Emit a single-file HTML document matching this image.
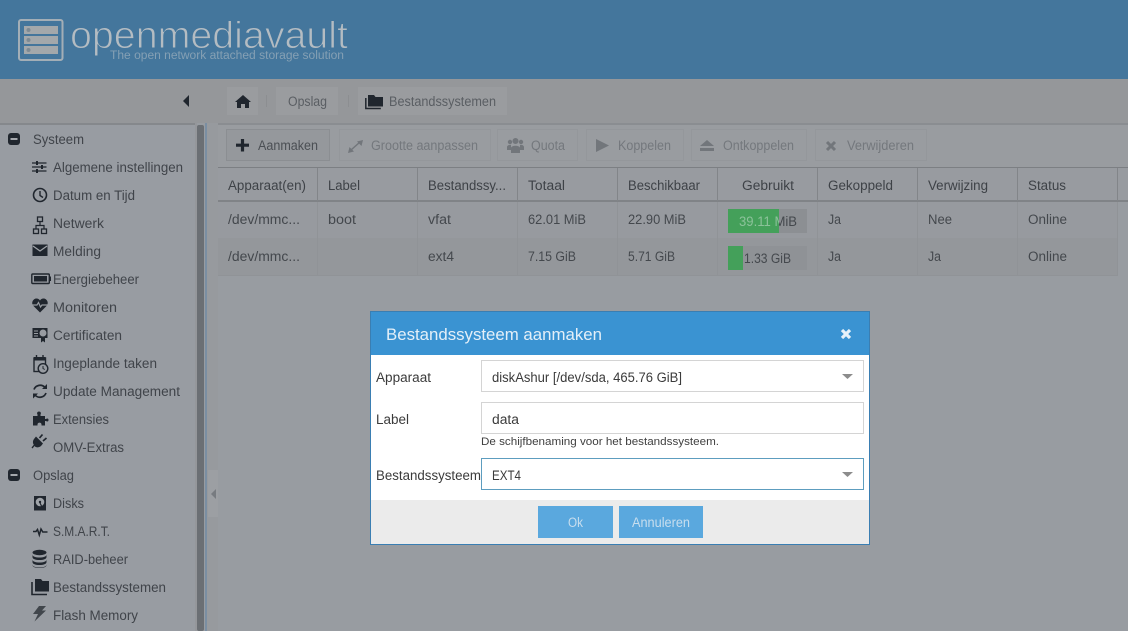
<!DOCTYPE html>
<html><head><meta charset="utf-8"><title>openmediavault</title>
<style>
html,body{margin:0;padding:0;width:1128px;height:631px;overflow:hidden;background:#989ca1}
svg{display:block}
text{font-family:"Liberation Sans",sans-serif;font-size:13.5px;fill:#40444a;white-space:pre}
.d{fill:#74787d}
.h{fill:#3e4247}
.c{fill:#44484d}
.m{fill:#3b3b3b}
.i{fill:#20262e}
.g{fill:#72767b}
.s{stroke:#20262e;fill:none;stroke-width:1.4}
</style></head><body>
<svg width="1128" height="631" viewBox="0 0 1128 631" xmlns="http://www.w3.org/2000/svg">
<defs><clipPath id="pg"><rect x="728" y="209" width="51" height="24"/></clipPath></defs>
<rect width="1128" height="631" fill="#989ca1"/>
<!-- header -->
<rect width="1128" height="79" fill="#44769c"/>
<rect x="19" y="20" width="43.500" height="40" rx="2" fill="none" stroke="#a3aeb6" stroke-width="2"/>
<rect x="24" y="26" width="34" height="8" fill="#a3a8ab"/><rect x="24" y="36" width="34" height="8" fill="#a3a8ab"/><rect x="24" y="46" width="34" height="8" fill="#a3a8ab"/>
<circle cx="28.500" cy="30" r="2" fill="#7d8a94"/><circle cx="28.500" cy="40" r="2" fill="#7d8a94"/><circle cx="28.500" cy="50" r="2" fill="#7d8a94"/>
<text x="70" y="48" textLength="278" lengthAdjust="spacingAndGlyphs" stroke="#44769c" stroke-width="1" style="font-size:38px;fill:#b4bcc2">openmediavault</text>
<text x="110" y="59" textLength="234" lengthAdjust="spacingAndGlyphs" style="font-size:11.500px;fill:#85a0b4">The open network attached storage solution</text>
<!-- breadcrumb bar -->
<rect y="79" width="1128" height="44" fill="#95979a"/>
<path d="M189 95v12l-6-6z" fill="#20262e"/>
<rect x="227" y="87" width="31" height="28" fill="#9a9c9f"/>
<path d="M243 95l-8 7h2v6h4v-4h4v4h4v-6h2z" fill="#20262e"/>
<rect x="266" y="95" width="1" height="12" fill="#8c8e91"/>
<rect x="276" y="87" width="62" height="28" fill="#9a9c9f"/>
<text x="288" y="106" textLength="39" lengthAdjust="spacingAndGlyphs" style="fill:#5a5e63">Opslag</text>
<rect x="348" y="95" width="1" height="12" fill="#8c8e91"/>
<rect x="358" y="87" width="149" height="28" fill="#9a9c9f"/>
<path d="M365.800 98v10.500h15" fill="none" stroke="#20262e" stroke-width="1.500"/><path d="M368 95h6l1.500 2h7.500v9.500h-15z" fill="#20262e"/>
<text x="389" y="106" textLength="107" lengthAdjust="spacingAndGlyphs" style="fill:#5a5e63">Bestandssystemen</text>
<!-- sidebar -->
<rect y="123" width="195" height="508" fill="#989ca2"/>
<rect y="123" width="195" height="2" fill="#85888c"/>
<rect x="195" y="123" width="2" height="508" fill="#95979b"/>
<rect x="197" y="125" width="7" height="506" rx="2" fill="#6b6f74"/>
<rect x="205" y="123" width="2" height="508" fill="#7a8ea2"/>
<rect x="207" y="123" width="11" height="508" fill="#979a9e"/>
<rect x="208" y="470" width="10" height="47" fill="#9c9fa3"/>
<path d="M216 489v10l-5-5z" fill="#777b80"/>
<!-- sidebar group icons -->
<rect x="8" y="133" width="12" height="12" rx="3" class="i"/><rect x="10.500" y="138" width="7" height="2" fill="#a5a8ad"/>
<rect x="8" y="469" width="12" height="12" rx="3" class="i"/><rect x="10.500" y="474" width="7" height="2" fill="#a5a8ad"/>
<text x="33" y="144" textLength="51" lengthAdjust="spacingAndGlyphs">Systeem</text>
<text x="53" y="172" textLength="130" lengthAdjust="spacingAndGlyphs">Algemene instellingen</text>
<text x="53" y="200" textLength="82" lengthAdjust="spacingAndGlyphs">Datum en Tijd</text>
<text x="53" y="228" textLength="51" lengthAdjust="spacingAndGlyphs">Netwerk</text>
<text x="53" y="256" textLength="48" lengthAdjust="spacingAndGlyphs">Melding</text>
<text x="53" y="284" textLength="86" lengthAdjust="spacingAndGlyphs">Energiebeheer</text>
<text x="53" y="312" textLength="64" lengthAdjust="spacingAndGlyphs">Monitoren</text>
<text x="53" y="340" textLength="69" lengthAdjust="spacingAndGlyphs">Certificaten</text>
<text x="53" y="368" textLength="104" lengthAdjust="spacingAndGlyphs">Ingeplande taken</text>
<text x="53" y="396" textLength="127" lengthAdjust="spacingAndGlyphs">Update Management</text>
<text x="53" y="424" textLength="56" lengthAdjust="spacingAndGlyphs">Extensies</text>
<text x="53" y="452" textLength="71" lengthAdjust="spacingAndGlyphs">OMV-Extras</text>
<text x="33" y="480" textLength="41" lengthAdjust="spacingAndGlyphs">Opslag</text>
<text x="53" y="508" textLength="31" lengthAdjust="spacingAndGlyphs">Disks</text>
<text x="53" y="536" textLength="57" lengthAdjust="spacingAndGlyphs">S.M.A.R.T.</text>
<text x="53" y="564" textLength="75" lengthAdjust="spacingAndGlyphs">RAID-beheer</text>
<text x="53" y="592" textLength="113" lengthAdjust="spacingAndGlyphs">Bestandssystemen</text>
<text x="53" y="620" textLength="85" lengthAdjust="spacingAndGlyphs">Flash Memory</text>
<!-- sliders -->
<path d="M32 163h14.500M32 167h14.500M32 171h14.500" stroke="#20262e" stroke-width="1.200"/>
<rect x="36" y="161" width="2" height="4" class="i"/><rect x="41" y="165" width="2" height="4" class="i"/><rect x="36" y="169" width="2" height="4" class="i"/>
<!-- clock -->
<circle cx="40" cy="195" r="6.500" class="s" style="stroke-width:1.600"/><path d="M40 191v4.500l3 2" class="s"/>
<!-- network -->
<path d="M40 222v3.500M36 229v-3.500h8v3.500" class="s" style="stroke-width:1.200"/>
<rect x="37.500" y="217" width="5" height="4.500" class="s" style="stroke-width:1.300"/><rect x="33.500" y="229" width="5" height="4.500" class="s" style="stroke-width:1.300"/><rect x="41.500" y="229" width="5" height="4.500" class="s" style="stroke-width:1.300"/>
<!-- mail -->
<rect x="32.500" y="244.500" width="15" height="11.500" class="i"/><path d="M33 246l7 5 7-5" fill="none" stroke="#a0a4a9" stroke-width="1.300"/>
<!-- battery -->
<rect x="31.800" y="274" width="17.500" height="9.500" rx="1" class="s"/><rect x="34" y="276" width="13" height="5.500" class="i"/><rect x="50" y="276.500" width="1" height="4.500" class="i"/>
<!-- heart -->
<path d="M40 312.500l-6.500-6.500c-3-3.500 0-7.500 3-7.500 1.500 0 2.700 .7 3.500 2 .8-1.300 2-2 3.500-2 3 0 6 4 3 7.500z" class="i"/>
<path d="M32 305h5l1.500-2.500 2 4.500 1.500-2h6" fill="none" stroke="#989ca2" stroke-width="1.200"/>
<!-- certificate -->
<rect x="32.500" y="328" width="15" height="10" class="i"/><path d="M34 331h4M34 333.500h4M34 336h4" stroke="#989ca2" stroke-width="1"/>
<circle cx="43" cy="333" r="3.500" fill="#989ca2"/><path d="M41 338h4v4.500l-2-1.500-2 1.500z" class="i"/>
<!-- calendar clock -->
<rect x="34" y="358" width="11.500" height="13.500" class="s"/><rect x="34" y="357" width="11.500" height="3.500" class="i"/><path d="M36.500 355v3M43 355v3" class="s"/>
<circle cx="43" cy="368.500" r="4.800" fill="#989ca2" stroke="#20262e" stroke-width="1.400"/><path d="M43 366v2.500l1.800 1" class="s" style="stroke-width:1"/>
<!-- sync -->
<path d="M34 389.500a6.500 6.500 0 0 1 11-2M46 393a6.500 6.500 0 0 1-11 2" class="s" style="stroke-width:1.700"/><path d="M47 384v5h-5zM33 398.500v-5h5z" class="i"/>
<!-- puzzle -->
<path d="M33 416h4.500v-1.500c-1-1.500 0-3 1.500-3s2.500 1.500 1.500 3V416H45v3h1c1.500-1 2.500-.3 2.500 1s-1 2-2.500 1h-1v4.500h-3.500v-1c0-2.500-4-2.500-4 0v1H33z" class="i"/>
<!-- plug -->
<path d="M36 436.500l7 7-2 2.500c-2.500 2-5 1.700-6.500 0l-2 2.500-1-1 2.300-2.700c-1.200-1.600-1.200-4 .4-6z" class="i"/><path d="M39.500 438l3-3.500M43 441l3.500-3" stroke="#20262e" stroke-width="1.700"/>
<!-- disk -->
<rect x="34" y="496" width="12" height="14.500" class="i"/><circle cx="40" cy="502" r="4.300" fill="#a0a4a9"/><circle cx="40" cy="502" r="1.200" class="i"/><path d="M40 503l2.500 5" stroke="#20262e" stroke-width="1.200"/>
<!-- pulse -->
<path d="M33 531.500h3l1.500-2 1.800 5.500 1.700-6 1.800 3h4.700" fill="none" stroke="#20262e" stroke-width="1.500"/>
<!-- database -->
<ellipse cx="39.500" cy="552.500" rx="7" ry="2.700" class="i"/>
<path d="M32.500 554.500c0 2 3 3 7 3s7-1 7-3v2.500c0 2-3 3-7 3s-7-1-7-3zM32.500 559.500c0 2 3 3 7 3s7-1 7-3v2.500c0 2-3 3-7 3s-7-1-7-3zM32.500 564.500c0 2 3 3 7 3s7-1 7-3v0.500c0 2-3 3-7 3s-7-1-7-3z" class="i"/>
<!-- folders -->
<path d="M32 582v12.500h15" fill="none" stroke="#20262e" stroke-width="1.600"/><path d="M35 579h6l1.500 2h6.500v10.500H35z" class="i"/>
<!-- flash -->
<path d="M39 606h7l-4 4.500h4l-11.500 11 3.500-7.500h-5z" fill="#41464c"/>
<!-- main area -->
<rect x="218" y="123" width="910" height="508" fill="#989ca1"/>
<rect x="218" y="123" width="910" height="2" fill="#8a8d91"/>
<rect x="218" y="125" width="910" height="42" fill="#999ca0"/>
<!-- toolbar -->
<rect x="226.500" y="129.500" width="103" height="31" fill="#95989c" stroke="#8b8e92"/>
<path d="M242.500 139v12.500M236 145.200h13" stroke="#20262e" stroke-width="3.200"/>
<text x="258" y="150" textLength="60" lengthAdjust="spacingAndGlyphs" style="fill:#4b4f54">Aanmaken</text>
<rect x="339.500" y="129.500" width="151" height="31" fill="#999ca0" stroke="#94979b"/>
<path d="M348 153l1.500-6 4.500 4.500zM363 140l-6 1.500 4.500 4.500z" fill="#72767b"/><path d="M351 150l9-8" stroke="#72767b" stroke-width="1.500"/>
<text x="371" y="150" textLength="107" lengthAdjust="spacingAndGlyphs" class="d">Grootte aanpassen</text>
<rect x="497.500" y="129.500" width="80" height="31" fill="#999ca0" stroke="#94979b"/>
<circle cx="515.500" cy="141" r="3" class="g"/><circle cx="510" cy="142" r="2.200" class="g"/><circle cx="521" cy="142" r="2.200" class="g"/>
<path d="M511 153v-5c0-3 9-3 9 0v5z" class="g"/><path d="M507 150v-3c0-2 3-2.500 4-2v5zM524 150v-3c0-2-3-2.500-4-2v5z" class="g"/>
<text x="531" y="150" textLength="34" lengthAdjust="spacingAndGlyphs" class="d">Quota</text>
<rect x="586.500" y="129.500" width="97" height="31" fill="#999ca0" stroke="#94979b"/>
<path d="M596 139l13 6.500-13 6.500z" class="g"/>
<text x="618" y="150" textLength="53" lengthAdjust="spacingAndGlyphs" class="d">Koppelen</text>
<rect x="691.500" y="129.500" width="115" height="31" fill="#999ca0" stroke="#94979b"/>
<path d="M707 140l7 6h-14z" class="g"/><rect x="700" y="148" width="14" height="3" class="g"/>
<text x="723" y="150" textLength="71" lengthAdjust="spacingAndGlyphs" class="d">Ontkoppelen</text>
<rect x="815.500" y="129.500" width="111" height="31" fill="#999ca0" stroke="#94979b"/>
<path d="M827 142l8 8M835 142l-8 8" stroke="#72767b" stroke-width="3"/>
<text x="847" y="150" textLength="67" lengthAdjust="spacingAndGlyphs" class="d">Verwijderen</text>
<!-- grid -->
<rect x="218" y="167" width="910" height="1" fill="#7c7f83"/>
<rect x="218" y="168" width="910" height="33" fill="#989ba0"/>
<rect x="218" y="200" width="910" height="2" fill="#808387"/>
<rect x="218" y="202" width="900" height="36" fill="#979a9f"/>
<rect x="218" y="238" width="900" height="37" fill="#94979b"/>
<rect x="218" y="275" width="900" height="1" fill="#909397"/>
<g fill="#828589"><rect x="317" y="168" width="1" height="33"/><rect x="417" y="168" width="1" height="33"/><rect x="517" y="168" width="1" height="33"/><rect x="617" y="168" width="1" height="33"/><rect x="717" y="168" width="1" height="33"/><rect x="817" y="168" width="1" height="33"/><rect x="917" y="168" width="1" height="33"/><rect x="1017" y="168" width="1" height="33"/><rect x="1117" y="168" width="1" height="33"/></g>
<g fill="#909397"><rect x="317" y="202" width="1" height="73"/><rect x="417" y="202" width="1" height="73"/><rect x="517" y="202" width="1" height="73"/><rect x="617" y="202" width="1" height="73"/><rect x="717" y="202" width="1" height="73"/><rect x="817" y="202" width="1" height="73"/><rect x="917" y="202" width="1" height="73"/><rect x="1017" y="202" width="1" height="73"/><rect x="1117" y="202" width="1" height="73"/></g>
<text x="228" y="190" textLength="78" lengthAdjust="spacingAndGlyphs" class="h">Apparaat(en)</text>
<text x="328" y="190" textLength="32" lengthAdjust="spacingAndGlyphs" class="h">Label</text>
<text x="428" y="190" textLength="78" lengthAdjust="spacingAndGlyphs" class="h">Bestandssy...</text>
<text x="528" y="190" textLength="37" lengthAdjust="spacingAndGlyphs" class="h">Totaal</text>
<text x="628" y="190" textLength="72" lengthAdjust="spacingAndGlyphs" class="h">Beschikbaar</text>
<text x="742" y="190" textLength="52" lengthAdjust="spacingAndGlyphs" class="h">Gebruikt</text>
<text x="828" y="190" textLength="65" lengthAdjust="spacingAndGlyphs" class="h">Gekoppeld</text>
<text x="928" y="190" textLength="60" lengthAdjust="spacingAndGlyphs" class="h">Verwijzing</text>
<text x="1028" y="190" textLength="38" lengthAdjust="spacingAndGlyphs" class="h">Status</text>
<text x="228" y="224" textLength="72" lengthAdjust="spacingAndGlyphs" class="c">/dev/mmc...</text>
<text x="328" y="224" textLength="28" lengthAdjust="spacingAndGlyphs" class="c">boot</text>
<text x="428" y="224" textLength="23" lengthAdjust="spacingAndGlyphs" class="c">vfat</text>
<text x="528" y="224" textLength="58" lengthAdjust="spacingAndGlyphs" class="c">62.01 MiB</text>
<text x="628" y="224" textLength="58" lengthAdjust="spacingAndGlyphs" class="c">22.90 MiB</text>
<text x="828" y="224" textLength="13" lengthAdjust="spacingAndGlyphs" class="c">Ja</text>
<text x="928" y="224" textLength="24" lengthAdjust="spacingAndGlyphs" class="c">Nee</text>
<text x="1028" y="224" textLength="39" lengthAdjust="spacingAndGlyphs" class="c">Online</text>
<text x="228" y="261" textLength="72" lengthAdjust="spacingAndGlyphs" class="c">/dev/mmc...</text>
<text x="428" y="261" textLength="26" lengthAdjust="spacingAndGlyphs" class="c">ext4</text>
<text x="528" y="261" textLength="48" lengthAdjust="spacingAndGlyphs" class="c">7.15 GiB</text>
<text x="628" y="261" textLength="47" lengthAdjust="spacingAndGlyphs" class="c">5.71 GiB</text>
<text x="828" y="261" textLength="13" lengthAdjust="spacingAndGlyphs" class="c">Ja</text>
<text x="928" y="261" textLength="13" lengthAdjust="spacingAndGlyphs" class="c">Ja</text>
<text x="1028" y="261" textLength="39" lengthAdjust="spacingAndGlyphs" class="c">Online</text>
<rect x="728" y="209" width="79" height="24" fill="#8c8f93"/>
<rect x="728" y="209" width="51" height="24" fill="#44a05a"/>
<text x="739" y="226" textLength="58" lengthAdjust="spacingAndGlyphs" class="c">39.11 MiB</text>
<rect x="728" y="209" width="51" height="24" fill="#44a05a"/>
<text x="739" y="226" textLength="58" lengthAdjust="spacingAndGlyphs" clip-path="url(#pg)" style="fill:#8cc29a">39.11 MiB</text>
<rect x="728" y="246" width="79" height="24" fill="#8f9296"/>
<rect x="728" y="246" width="15" height="24" fill="#44a05a"/>
<text x="744" y="263" textLength="47" lengthAdjust="spacingAndGlyphs" class="c">1.33 GiB</text>
<!-- modal -->
<rect x="370.500" y="311.500" width="499" height="233" fill="#fff" stroke="#3a7eb2"/>
<rect x="371" y="312" width="498" height="43" fill="#3a93d2"/>
<text x="386" y="340" textLength="216" lengthAdjust="spacingAndGlyphs" style="font-size:16.500px;fill:#e3eff8">Bestandssysteem aanmaken</text>
<path d="M842 330l8 8M850 330l-8 8" stroke="#e6f1f9" stroke-width="3.200"/>
<text x="376" y="382" textLength="55" lengthAdjust="spacingAndGlyphs" class="m">Apparaat</text>
<rect x="481.500" y="360.500" width="382" height="31" fill="#fff" stroke="#d4d4d4"/>
<text x="492" y="382" textLength="190" lengthAdjust="spacingAndGlyphs" class="m">diskAshur [/dev/sda, 465.76 GiB]</text>
<path d="M842 374h11l-5.500 5z" fill="#8c8c8c"/>
<text x="376" y="424" textLength="33" lengthAdjust="spacingAndGlyphs" class="m">Label</text>
<rect x="481.500" y="402.500" width="382" height="31" fill="#fff" stroke="#d4d4d4"/>
<text x="492" y="424" textLength="27" lengthAdjust="spacingAndGlyphs" class="m">data</text>
<text x="481" y="445" textLength="238" lengthAdjust="spacingAndGlyphs" style="font-size:11.200px;fill:#404040">De schijfbenaming voor het bestandssysteem.</text>
<text x="376" y="480" textLength="105" lengthAdjust="spacingAndGlyphs" class="m">Bestandssysteem</text>
<rect x="481.500" y="458.500" width="382" height="31" fill="#fff" stroke="#5d9dbf"/>
<text x="492" y="480" textLength="29" lengthAdjust="spacingAndGlyphs" class="m">EXT4</text>
<path d="M842 472h11l-5.500 5z" fill="#8c8c8c"/>
<rect x="371" y="500" width="498" height="44" fill="#ebebeb"/>
<rect x="538" y="506" width="75" height="32" fill="#5aa8de"/>
<text x="568" y="527" textLength="15" lengthAdjust="spacingAndGlyphs" style="fill:#c8deee">Ok</text>
<rect x="619" y="506" width="84" height="32" fill="#5aa8de"/>
<text x="632" y="527" textLength="58" lengthAdjust="spacingAndGlyphs" style="fill:#c8deee">Annuleren</text>
</svg>
</body></html>
